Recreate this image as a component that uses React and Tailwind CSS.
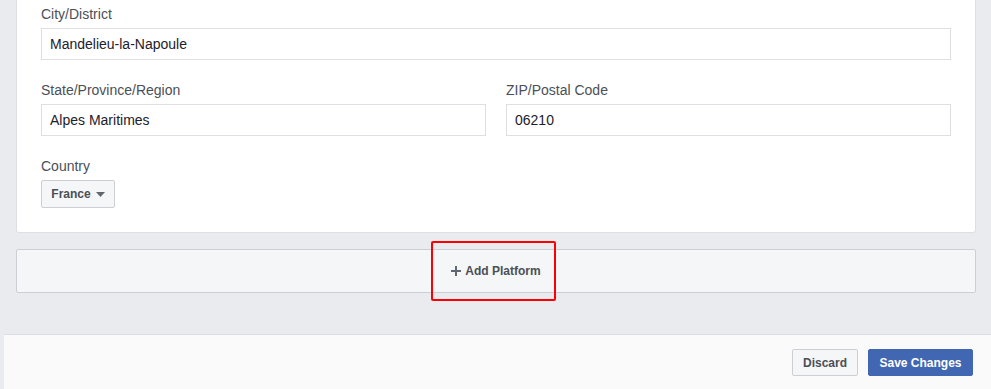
export default function App() {
  const font = { fontFamily: '"Liberation Sans", Arial, sans-serif' };

  return (
    <div style={font} className="relative h-[389px] w-[991px] overflow-hidden bg-[#e9ebee]">
      {/* Address card (top cut off) */}
      <div className="mx-4 w-[960px] rounded-b-[3px] border border-t-0 border-[#dddfe2] bg-white px-6 pb-6 pt-[5px]">
        <div className="flex flex-col">
          <label className="mb-[5px] text-[14px] leading-[18px] text-[#4b4f56]">City/District</label>
          <div className="flex h-8 items-center border border-[#dddfe2] px-2 text-[14px] text-[#1d2129]">
            Mandelieu-la-Napoule
          </div>
        </div>

        <div className="mt-[21px] flex gap-5">
          <div className="flex flex-1 flex-col">
            <label className="mb-[5px] text-[14px] leading-[18px] text-[#4b4f56]">State/Province/Region</label>
            <div className="flex h-8 items-center border border-[#dddfe2] px-2 text-[14px] text-[#1d2129]">
              Alpes Maritimes
            </div>
          </div>
          <div className="flex flex-1 flex-col">
            <label className="mb-[5px] text-[14px] leading-[18px] text-[#4b4f56]">ZIP/Postal Code</label>
            <div className="flex h-8 items-center border border-[#dddfe2] px-2 text-[14px] text-[#1d2129]">
              06210
            </div>
          </div>
        </div>

        <div className="mt-[21px] flex flex-col items-start">
          <label className="mb-[5px] text-[14px] leading-[18px] text-[#4b4f56]">Country</label>
          <button className="flex h-7 w-[74px] items-center justify-center gap-[5px] rounded-[2px] border border-[#ccd0d5] bg-[#f5f6f7] text-[12px] font-bold text-[#4b4f56]">
            France
            <svg width="9" height="5" viewBox="0 0 9 5">
              <path d="M0 0h9L4.5 5z" fill="#606770" />
            </svg>
          </button>
        </div>
      </div>

      {/* Add platform */}
      <div className="mx-4 mt-4 flex h-[44px] w-[960px] items-center justify-center gap-[4px] rounded-[2px] border border-[#ccd0d5] bg-[#f5f6f7] text-[12px] font-bold text-[#4b4f56]">
        <svg width="10" height="10" viewBox="0 0 10 10">
          <path d="M5 0v10M0 5h10" stroke="#606770" strokeWidth="2" />
        </svg>
        Add Platform
      </div>

      {/* highlight */}
      <div className="absolute left-[431px] top-[241px] h-[60px] w-[125px] rounded-[2px] border-2 border-[#f00]" />

      {/* Footer */}
      <div className="ml-1 mt-[41px] flex h-[60px] justify-end gap-[10px] border-t border-[#dadde1] bg-[#fafafa] pr-[18px] pt-[14px]">
        <button className="flex h-[27px] w-[66px] items-center justify-center rounded-[2px] border border-[#ccd0d5] bg-[#f5f6f7] text-[12px] font-bold text-[#4b4f56]">
          Discard
        </button>
        <button className="flex h-[27px] w-[105px] items-center justify-center rounded-[2px] border border-[#4267b2] bg-[#4267b2] text-[12px] font-bold text-white">
          Save Changes
        </button>
      </div>
    </div>
  );
}
